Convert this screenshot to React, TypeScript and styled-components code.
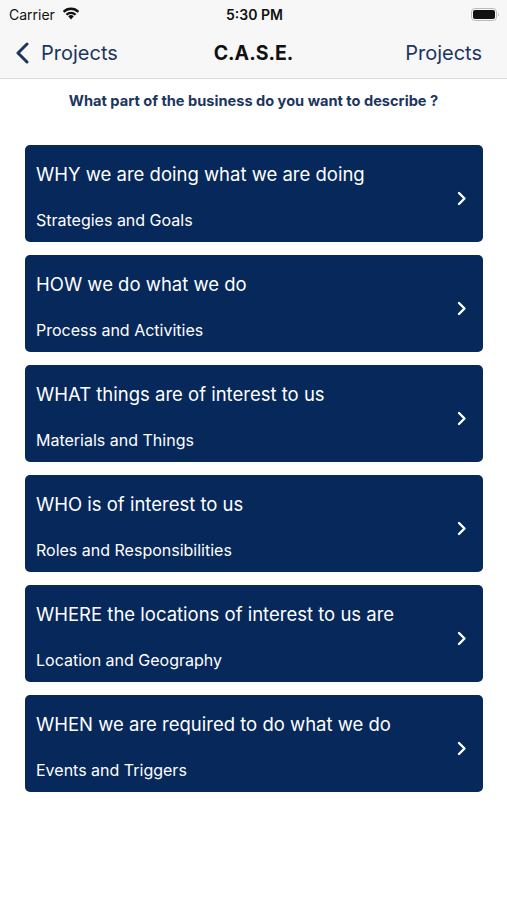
import React from 'react'
import styled, { createGlobalStyle } from 'styled-components'

const GlobalStyle = createGlobalStyle`
  html, body {
    margin: 0;
    padding: 0;
    background: #ffffff;
    font-family: Inter, "Liberation Sans", Arial, sans-serif;
  }
`

const items = [
  { title: 'WHY we are doing what we are doing', sub: 'Strategies and Goals' },
  { title: 'HOW we do what we do', sub: 'Process and Activities' },
  { title: 'WHAT things are of interest to us', sub: 'Materials and Things' },
  { title: 'WHO is of interest to us', sub: 'Roles and Responsibilities' },
  { title: 'WHERE the locations of interest to us are', sub: 'Location and Geography' },
  { title: 'WHEN we are required to do what we do', sub: 'Events and Triggers' },
]

const App: React.FC = () => {
  return (
    <Page>
      <GlobalStyle />
      <Header>
        <StatusBar>
          <StatusLeft>
            Carrier
            <svg width="18" height="13" viewBox="0 0 18 13">
              <path d="M9 12.5 L6.2 9.3 A4 4 0 0 1 11.8 9.3 Z" fill="#111" />
              <path d="M3.6 6.9 A7.6 7.6 0 0 1 14.4 6.9 L12.8 8.6 A5.3 5.3 0 0 0 5.2 8.6 Z" fill="#111" />
              <path d="M0.8 4 A11.6 11.6 0 0 1 17.2 4 L15.6 5.7 A9.3 9.3 0 0 0 2.4 5.7 Z" fill="#111" />
            </svg>
          </StatusLeft>
          <StatusTime>5:30 PM</StatusTime>
          <StatusRight>
            <svg width="29" height="13" viewBox="0 0 29 13">
              <rect x="0.5" y="0.5" width="25" height="12" rx="3.5" fill="none" stroke="#bbb" />
              <rect x="2" y="2" width="22" height="9" rx="2" fill="#111" />
              <path d="M27 4.5 Q28.5 6.5 27 8.5 Z" fill="#aaa" />
            </svg>
          </StatusRight>
        </StatusBar>
        <NavBar>
          <NavBack>
            <svg width="14" height="22" viewBox="0 0 14 22">
              <path d="M12 2 L3 11 L12 20" fill="none" stroke="#1c3560" strokeWidth="3" strokeLinecap="round" strokeLinejoin="round" />
            </svg>
            Projects
          </NavBack>
          <NavTitle>C.A.S.E.</NavTitle>
          <NavAction>Projects</NavAction>
        </NavBar>
      </Header>
      <Question>What part of the business do you want to describe ?</Question>
      <List>
        {items.map(item => (
          <Card key={item.title}>
            <CardText>
              <CardTitle>{item.title}</CardTitle>
              <CardSub>{item.sub}</CardSub>
            </CardText>
            <Chevron width="10" height="15" viewBox="0 0 10 15">
              <path d="M2 2 L7.5 7.5 L2 13" fill="none" stroke="#ffffff" strokeWidth="2.4" strokeLinecap="round" strokeLinejoin="round" />
            </Chevron>
          </Card>
        ))}
      </List>
    </Page>
  )
}

const Page = styled.div`
  width: 507px;
  min-height: 900px;
  background: #ffffff;
`

const Header = styled.div`
  background: #f7f7f7;
  border-bottom: 1px solid #dddddd;
`

const StatusBar = styled.div`
  height: 28px;
  display: grid;
  grid-template-columns: 1fr auto 1fr;
  align-items: center;
  padding: 0 7px 0 9px;
  font-size: 14px;
  color: #111;
`

const StatusLeft = styled.div`
  display: flex;
  align-items: center;
  gap: 7px;
  svg { margin-top: -2px; }
`

const StatusTime = styled.div`
  font-weight: 600;
`

const StatusRight = styled.div`
  display: flex;
  justify-content: flex-end;
`

const NavBar = styled.div`
  height: 50px;
  display: grid;
  grid-template-columns: 1fr auto 1fr;
  align-items: center;
  padding: 0 25px;
  font-size: 20px;
  color: #1c3560;
`

const NavBack = styled.div`
  display: flex;
  align-items: center;
  gap: 12px;
  margin-left: -10px;
`

const NavTitle = styled.div`
  font-weight: 700;
  color: #111;
  font-size: 19.5px;
`

const NavAction = styled.div`
  justify-self: end;
`

const Question = styled.div`
  text-align: center;
  font-size: 14.6px;
  font-weight: 700;
  color: #1c3560;
  margin-top: 13px;
`

const List = styled.div`
  display: flex;
  flex-direction: column;
  gap: 13px;
  padding: 0 24px 0 25px;
  margin-top: 35px;
`

const Card = styled.div`
  height: 97px;
  box-sizing: border-box;
  background: #06285a;
  border-radius: 5px;
  display: flex;
  align-items: center;
  padding: 0 16px 0 11px;
  color: #ffffff;
`

const CardText = styled.div`
  flex: 1;
  display: flex;
  flex-direction: column;
  gap: 25px;
  margin-top: 6px;
`

const CardTitle = styled.div`
  font-size: 18.5px;
`

const CardSub = styled.div`
  font-size: 16px;
`

const Chevron = styled.svg`
  margin-top: 10px;
`

export default App
